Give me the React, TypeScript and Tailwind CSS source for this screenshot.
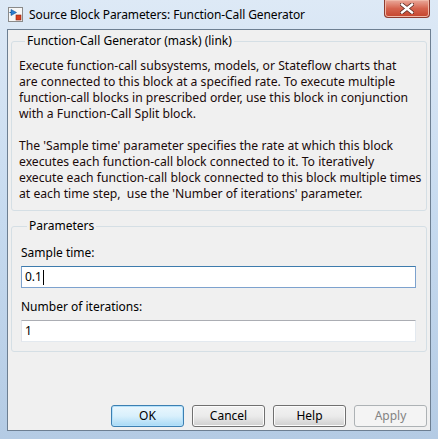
import React from "react";

const font = { fontFamily: '"Segoe UI", "Noto Sans", "Open Sans", sans-serif' };

function SimIcon() {
  return (
    <svg width="15" height="15" viewBox="0 0 15 15">
      <rect x="0.5" y="0.5" width="14" height="14" fill="#f7f7f7" stroke="#8a8a8a" />
      <path d="M3 2.5 L3 8.5 L8.5 5.5 Z" fill="#2a7fd4" stroke="#16508f" strokeWidth="0.6" />
      <path d="M1.5 5.5 H3" stroke="#16508f" strokeWidth="1" />
      <rect x="8" y="8" width="5" height="5" fill="#d8401f" stroke="#8e2410" strokeWidth="0.6" />
    </svg>
  );
}

function Btn({ label, kind }: { label: string; kind?: "default" | "disabled" }) {
  const base =
    "w-[73px] h-[22px] rounded-[3px] flex items-center justify-center text-[12px] leading-none";
  if (kind === "default")
    return (
      <div className={base + " border border-[#3c7fb1] bg-gradient-to-b from-[#eaf6fd] via-[#d9f0fc] to-[#a7d9f5] text-black shadow-[inset_0_0_0_1px_#b4e1fb]"}>
        {label}
      </div>
    );
  if (kind === "disabled")
    return (
      <div className={base + " border border-[#adb2b5] bg-[#f4f4f4] text-[#838383]"}>{label}</div>
    );
  return (
    <div className={base + " border border-[#707070] bg-gradient-to-b from-[#f2f2f2] via-[#ebebeb] to-[#cfcfcf] text-black shadow-[inset_0_0_0_1px_#fcfcfc]"}>
      {label}
    </div>
  );
}

export default function App() {
  const desc1 = [
    "Execute function-call subsystems, models, or Stateflow charts that",
    "are connected to this block at a specified rate. To execute multiple",
    "function-call blocks in prescribed order, use this block in conjunction",
    "with a Function-Call Split block.",
  ];
  const desc2 = [
    "The 'Sample time' parameter specifies the rate at which this block",
    "executes each function-call block connected to it. To iteratively",
    "execute each function-call block connected to this block multiple times",
    "at each time step,  use the 'Number of iterations' parameter.",
  ];
  return (
    <div
      className="w-[438px] h-[439px] flex flex-col bg-gradient-to-b from-[#dde9f6] via-[#c6daef] to-[#b4cbe4] text-black"
      style={font}
    >
      <div className="h-[29px] flex items-start relative shrink-0">
        <div className="ml-[8px] mt-[7px]">
          <SimIcon />
        </div>
        <div className="ml-[6px] mt-[6px] text-[12px] leading-[18px] text-black tracking-[-0.1px]">
          Source Block Parameters: Function-Call Generator
        </div>
        <div className="absolute left-[384px] top-0 w-[46px] h-[18px] rounded-b-[4px] border border-t-0 border-[#8d3b2f] bg-gradient-to-b from-[#e9a99b] via-[#d5634e] to-[#c4442c] flex items-center justify-center shadow-[inset_0_0_0_1px_#f0b8a8]">
          <svg width="14" height="11" viewBox="0 0 14 11">
            <path d="M2 1.5 L12 9.5 M12 1.5 L2 9.5" stroke="#5a2a22" strokeWidth="4" strokeLinecap="square" />
            <path d="M2 1.5 L12 9.5 M12 1.5 L2 9.5" stroke="#ffffff" strokeWidth="2.4" strokeLinecap="square" />
          </svg>
        </div>
      </div>
      <div className="mx-[7px] h-[402px] border border-[#6d7f92] bg-[#f0f0f0] flex flex-col px-[3px] pb-[3px]">
        <fieldset className="mt-[3px] border border-[#d5dfe5] rounded-[3px] pl-[7px] pr-[4px] pb-[8px]">
          <legend className="ml-[6px] px-[2px] text-[12px] leading-[16px]">
            Function-Call Generator (mask) (link)
          </legend>
          <div className="pt-[9px] text-[12.2px] leading-[16px] text-[#1a0a0a] whitespace-pre">
            {desc1.map((l) => (
              <div key={l}>{l}</div>
            ))}
            <div>&nbsp;</div>
            {desc2.map((l) => (
              <div key={l}>{l}</div>
            ))}
          </div>
        </fieldset>
        <fieldset className="mt-[7px] border border-[#d5dfe5] rounded-[3px] pl-[9px] pr-[10px] pb-[9px]">
          <legend className="ml-[6px] px-[2px] text-[12px] leading-[16px]">Parameters</legend>
          <div className="pt-[11px] text-[12px] leading-[16px]">Sample time:</div>
          <div className="mt-[5px] h-[22px] border border-[#7da2ce] border-t-[#3d7bad] bg-white flex items-center pl-[3px] text-[12px]">
            <span>0.1</span>
            <span className="w-px h-[15px] bg-black ml-[1px]" />
          </div>
          <div className="mt-[11px] text-[12px] leading-[16px]">Number of iterations:</div>
          <div className="mt-[5px] h-[22px] border border-[#e3e9ef] border-t-[#abadb3] border-l-[#e2e3ea] bg-white flex items-center pl-[3px] text-[12px]">
            1
          </div>
        </fieldset>
        <div className="mt-auto flex justify-end gap-[8px]">
          <Btn label="OK" kind="default" />
          <Btn label="Cancel" />
          <Btn label="Help" />
          <Btn label="Apply" kind="disabled" />
        </div>
      </div>
    </div>
  );
}
